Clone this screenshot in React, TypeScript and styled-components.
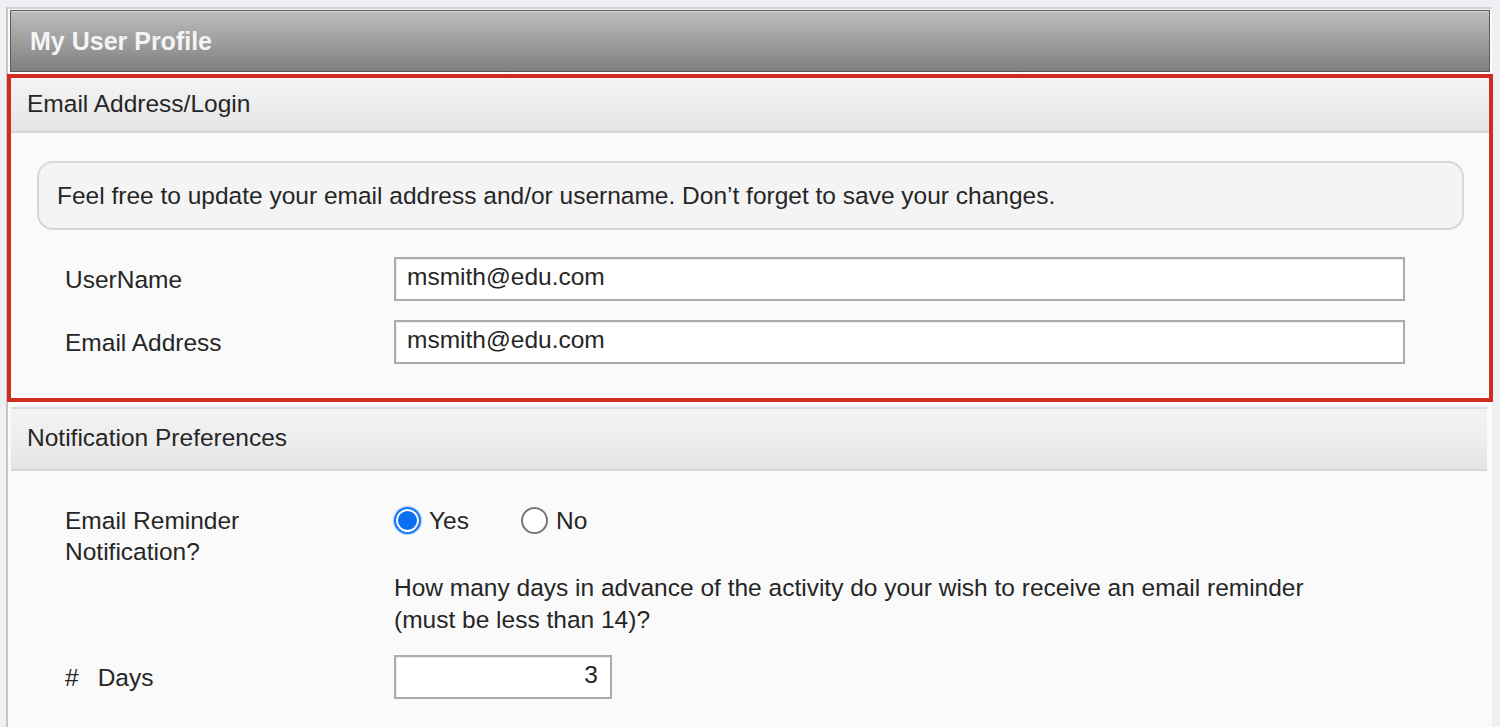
import React from 'react';
import styled, { createGlobalStyle } from 'styled-components';

const GlobalStyle = createGlobalStyle`
  * {
    box-sizing: border-box;
  }

  body {
    margin: 0;
    background-color: #eef0f4;
    color: #262626;
    font-family: 'Liberation Sans', Arial, sans-serif;
  }
`;

const StyledPanel = styled.div`
  background-color: #fafafa;
  border-left: 2px solid #c6c6c6;
  border-top: 2px solid #d2d2d2;
  height: 720px;
  margin: 7px 0 0 6px;
  width: 1486px;
`;

const StyledTitleBar = styled.div`
  background: linear-gradient(to bottom, #bdbdbd 0%, #a2a2a2 45%, #7f7f7f 100%);
  border: 1px solid #5a5a5a;
  box-shadow: inset 0 1px 0 rgba(255, 255, 255, 0.35);
  color: #f4f4f4;
  display: flex;
  align-items: center;
  font-size: 25px;
  font-weight: bold;
  height: 62px;
  margin: 1px 0 0 2px;
  padding-left: 19px;
  width: 1480px;
`;

const StyledSection = styled.section<{ $highlight?: boolean }>`
  border: 4px solid ${(props) => (props.$highlight ? '#d22b1f' : 'transparent')};
  margin: ${(props) => (props.$highlight ? '2px 0 0 -1px' : '1px 0 0 -1px')};
  width: ${(props) => (props.$highlight ? '1486px' : '1484px')};
`;

const StyledSectionHeader = styled.div<{ $tall?: boolean }>`
  background: linear-gradient(to bottom, #f3f3f3 0%, #ececec 60%, #e5e5e5 100%);
  border-bottom: 2px solid #d6d6d6;
  border-top: ${(props) => (props.$tall ? '2px solid #dcdcdc' : 'none')};
  display: flex;
  align-items: center;
  font-size: 24.5px;
  height: ${(props) => (props.$tall ? '64px' : '55px')};
  padding: 0 0 2px 16px;
`;

const StyledSectionBody = styled.div<{ $top: number; $bottom: number }>`
  display: flex;
  flex-direction: column;
  padding: ${(props) => `${props.$top}px 0 ${props.$bottom}px 26px`};
`;

const StyledNotice = styled.div`
  background-color: #f4f4f4;
  border: 2px solid #d7d7d7;
  border-radius: 16px;
  display: flex;
  align-items: center;
  font-size: 24.5px;
  height: 69px;
  margin-bottom: 27px;
  padding-left: 18px;
  width: 1427px;
`;

const StyledRow = styled.div<{ $gap?: number }>`
  display: grid;
  grid-template-columns: 329px 1fr;
  align-items: center;
  margin-bottom: ${(props) => props.$gap ?? 0}px;
  padding-left: 28px;
`;

const StyledTopRow = styled(StyledRow)`
  align-items: start;
`;

const StyledLabel = styled.label`
  font-size: 24.5px;
  line-height: 31px;
  max-width: 200px;
`;

const StyledInput = styled.input<{ $width: number; $alignRight?: boolean }>`
  background-color: #ffffff;
  border: 2px solid #ababab;
  box-shadow: inset 1px 1px 1px rgba(0, 0, 0, 0.08);
  color: #262626;
  font-family: 'Liberation Sans', Arial, sans-serif;
  font-size: 24.5px;
  height: 44px;
  outline: none;
  padding: 0 ${(props) => (props.$alignRight ? '12px' : '11px')} 5px 11px;
  text-align: ${(props) => (props.$alignRight ? 'right' : 'left')};
  width: ${(props) => props.$width}px;
`;

const StyledRadioGroup = styled.div`
  display: flex;
  align-items: center;
  gap: 52px;
  height: 31px;
`;

const StyledRadioOption = styled.label`
  display: flex;
  align-items: center;
  gap: 8px;
  font-size: 24.5px;
`;

const StyledRadioMark = styled.span<{ $checked?: boolean }>`
  background-color: ${(props) => (props.$checked ? '#0b6ff0' : '#ffffff')};
  border: 2px solid ${(props) => (props.$checked ? '#1a7cf5' : '#767676')};
  border-radius: 50%;
  box-shadow: ${(props) =>
    props.$checked ? 'inset 0 0 0 2px #ffffff, 0 0 0 1px rgba(26, 124, 245, 0.35)' : 'none'};
  display: inline-block;
  height: 27px;
  width: 27px;
`;

const StyledHelpText = styled.p`
  font-size: 24.5px;
  line-height: 32px;
  margin: 36px 0 19px 0;
  max-width: 940px;
`;

const StyledDaysLabel = styled.label`
  display: flex;
  gap: 19px;
  font-size: 24.5px;
  padding-top: 1px;
`;

const App: React.FC = () => {
  return (
    <>
      <GlobalStyle />
      <StyledPanel>
        <StyledTitleBar>My User Profile</StyledTitleBar>

        <StyledSection $highlight>
          <StyledSectionHeader>Email Address/Login</StyledSectionHeader>
          <StyledSectionBody $top={28} $bottom={34}>
            <StyledNotice>
              Feel free to update your email address and/or username. Don’t forget to save your
              changes.
            </StyledNotice>
            <StyledRow $gap={19}>
              <StyledLabel>UserName</StyledLabel>
              <StyledInput $width={1011} defaultValue="msmith@edu.com" />
            </StyledRow>
            <StyledRow>
              <StyledLabel>Email Address</StyledLabel>
              <StyledInput $width={1011} defaultValue="msmith@edu.com" />
            </StyledRow>
          </StyledSectionBody>
        </StyledSection>

        <StyledSection>
          <StyledSectionHeader $tall>Notification Preferences</StyledSectionHeader>
          <StyledSectionBody $top={34} $bottom={20}>
            <StyledTopRow>
              <StyledLabel>Email Reminder Notification?</StyledLabel>
              <div>
                <StyledRadioGroup>
                  <StyledRadioOption>
                    <StyledRadioMark $checked />
                    Yes
                  </StyledRadioOption>
                  <StyledRadioOption>
                    <StyledRadioMark />
                    No
                  </StyledRadioOption>
                </StyledRadioGroup>
                <StyledHelpText>
                  How many days in advance of the activity do your wish to receive an email reminder
                  (must be less than 14)?
                </StyledHelpText>
              </div>
            </StyledTopRow>
            <StyledRow>
              <StyledDaysLabel>
                <span>#</span>
                <span>Days</span>
              </StyledDaysLabel>
              <StyledInput $width={218} $alignRight defaultValue="3" />
            </StyledRow>
          </StyledSectionBody>
        </StyledSection>
      </StyledPanel>
    </>
  );
};

export default App;
